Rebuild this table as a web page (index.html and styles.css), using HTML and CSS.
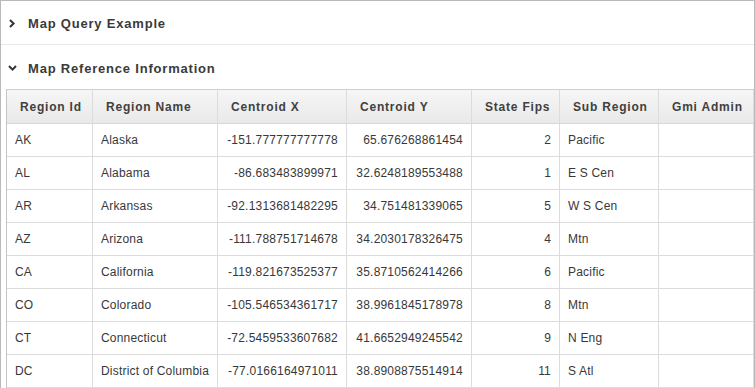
FILE: index.html
```html
<!DOCTYPE html>
<html>
<head>
<meta charset="utf-8">
<link rel="stylesheet" href="styles.css">
</head>
<body>
<div class="frame">
  <div class="region collapsed">
    <div class="region-head">
      <svg class="chev" width="8" height="9" viewBox="0 0 8 9"><polyline points="2,1 5.6,4.5 2,8" fill="none" stroke="#333" stroke-width="2"/></svg>
      <span class="title">Map Query Example</span>
    </div>
  </div>
  <div class="region">
    <div class="region-head">
      <svg class="chev" width="9" height="8" viewBox="0 0 9 8"><polyline points="1,2 4.5,5.6 8,2" fill="none" stroke="#333" stroke-width="2"/></svg>
      <span class="title">Map Reference Information</span>
    </div>
    <div class="region-body">
      <table class="report">
        <thead>
          <tr>
            <th class="c1">Region Id</th>
            <th class="c2">Region Name</th>
            <th class="c3">Centroid X</th>
            <th class="c4">Centroid Y</th>
            <th class="c5">State Fips</th>
            <th class="c6">Sub Region</th>
            <th class="c7">Gmi Admin</th>
          </tr>
        </thead>
        <tbody>
          <tr><td>AK</td><td>Alaska</td><td class="num">-151.777777777778</td><td class="num">65.676268861454</td><td class="num">2</td><td>Pacific</td><td></td></tr>
          <tr><td>AL</td><td>Alabama</td><td class="num">-86.683483899971</td><td class="num">32.6248189553488</td><td class="num">1</td><td>E S Cen</td><td></td></tr>
          <tr><td>AR</td><td>Arkansas</td><td class="num">-92.1313681482295</td><td class="num">34.751481339065</td><td class="num">5</td><td>W S Cen</td><td></td></tr>
          <tr><td>AZ</td><td>Arizona</td><td class="num">-111.788751714678</td><td class="num">34.2030178326475</td><td class="num">4</td><td>Mtn</td><td></td></tr>
          <tr><td>CA</td><td>California</td><td class="num">-119.821673525377</td><td class="num">35.8710562414266</td><td class="num">6</td><td>Pacific</td><td></td></tr>
          <tr><td>CO</td><td>Colorado</td><td class="num">-105.546534361717</td><td class="num">38.9961845178978</td><td class="num">8</td><td>Mtn</td><td></td></tr>
          <tr><td>CT</td><td>Connecticut</td><td class="num">-72.5459533607682</td><td class="num">41.6652949245542</td><td class="num">9</td><td>N Eng</td><td></td></tr>
          <tr><td>DC</td><td>District of Columbia</td><td class="num">-77.0166164971011</td><td class="num">38.8908875514914</td><td class="num">11</td><td>S Atl</td><td></td></tr>
        </tbody>
      </table>
    </div>
  </div>
</div>
</body>
</html>
```
FILE: styles.css
```css
html, body {
  margin: 0;
  padding: 0;
  background: #ffffff;
}
body {
  font-family: "Liberation Sans", Arial, sans-serif;
  color: #333333;
}
.frame {
  box-sizing: border-box;
  width: 755px;
  height: 388px;
  border: 1px solid #b9b9b9;
  border-bottom: none;
  overflow: hidden;
  background: #fff;
}
.region.collapsed {
  border-bottom: 1px solid #e8e8e8;
}
.region-head {
  box-sizing: border-box;
  display: flex;
  align-items: center;
  height: 43px;
  padding: 2px 0 0 7px;
  gap: 12px;
}
.region:not(.collapsed) .region-head {
  height: 44px;
  gap: 11px;
}
.chev {
  display: block;
  flex: none;
}
.title {
  font-size: 13px;
  font-weight: bold;
  letter-spacing: 0.8px;
  color: #3a3a3a;
}
.region-body {
  padding-left: 5px;
}
.report {
  table-layout: fixed;
  border-collapse: separate;
  border-spacing: 0;
  width: 748px;
  border-top: 1px solid #cfcfcf;
  border-left: 1px solid #c4c4c4;
}
.report th, .report td {
  box-sizing: border-box;
  border-right: 1px solid #dcdcdc;
  border-bottom: 1px solid #dcdcdc;
  padding: 0 8px;
  white-space: nowrap;
  overflow: hidden;
}
.report th {
  height: 34px;
  padding: 0 4px 0 13px;
  font-size: 12px;
  font-weight: bold;
  letter-spacing: 0.8px;
  color: #404040;
  text-align: left;
  background: linear-gradient(#f6f6f6, #e9e9e9);
  border-bottom-color: #d6d6d6;
}
.report td {
  height: 33px;
  font-size: 12px;
  letter-spacing: 0.2px;
  color: #383838;
  text-align: left;
}
.report td.num {
  text-align: right;
}
.c1 { width: 86px; }
.c2 { width: 125px; }
.c3 { width: 129px; }
.c4 { width: 125px; }
.c5 { width: 88px; }
.c6 { width: 99px; }
.c7 { width: 95px; }
```
